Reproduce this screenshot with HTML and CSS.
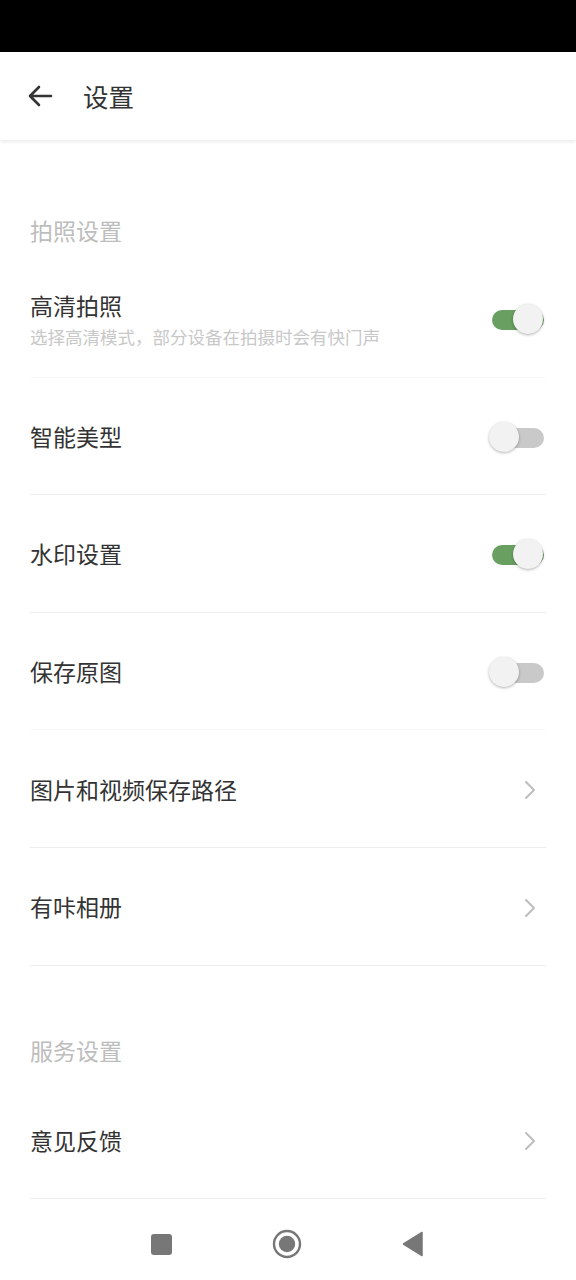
FILE: index.html
```html
<!DOCTYPE html>
<html lang="zh-CN">
<head>
    <meta charset="UTF-8">
    <meta name="viewport" content="width=device-width, initial-scale=1.0">
    <title>设置</title>
    <link rel="stylesheet" href="styles.css">
</head>
<body>
    <div class="status-bar"></div>

    <header class="app-bar">
        <svg class="back-icon" width="28" height="28" viewBox="0 0 28 28">
            <path d="M25 14H4M13 5l-9 9 9 9" fill="none" stroke="#333" stroke-width="2.6" stroke-linecap="round" stroke-linejoin="round"/>
        </svg>
        <h1 class="app-title">设置</h1>
    </header>

    <main class="content">
        <div class="section-title">拍照设置</div>

        <div class="row row--faint">
            <div class="row-text">
                <div class="row-title">高清拍照</div>
                <div class="row-desc">选择高清模式，部分设备在拍摄时会有快门声</div>
            </div>
            <span class="switch switch--on"><span class="thumb"></span></span>
        </div>
        <div class="row">
            <div class="row-title">智能美型</div>
            <span class="switch"><span class="thumb"></span></span>
        </div>
        <div class="row">
            <div class="row-title">水印设置</div>
            <span class="switch switch--on"><span class="thumb"></span></span>
        </div>
        <div class="row row--faint">
            <div class="row-title">保存原图</div>
            <span class="switch"><span class="thumb"></span></span>
        </div>
        <div class="row">
            <div class="row-title">图片和视频保存路径</div>
            <svg class="chevron" width="14" height="22" viewBox="0 0 14 22"><path d="M3 3l8 8-8 8" fill="none" stroke="#bdbdbd" stroke-width="2" stroke-linecap="round" stroke-linejoin="round"/></svg>
        </div>
        <div class="row">
            <div class="row-title">有咔相册</div>
            <svg class="chevron" width="14" height="22" viewBox="0 0 14 22"><path d="M3 3l8 8-8 8" fill="none" stroke="#bdbdbd" stroke-width="2" stroke-linecap="round" stroke-linejoin="round"/></svg>
        </div>

        <div class="section-title section-title--second">服务设置</div>

        <div class="row">
            <div class="row-title">意见反馈</div>
            <svg class="chevron" width="14" height="22" viewBox="0 0 14 22"><path d="M3 3l8 8-8 8" fill="none" stroke="#bdbdbd" stroke-width="2" stroke-linecap="round" stroke-linejoin="round"/></svg>
        </div>
    </main>

    <nav class="nav-bar">
        <span class="nav-square"></span>
        <svg width="30" height="30" viewBox="0 0 30 30">
            <circle cx="15" cy="15" r="13" fill="none" stroke="#777" stroke-width="2.4"/>
            <circle cx="15" cy="15" r="8.2" fill="#777"/>
        </svg>
        <svg width="22" height="26" viewBox="0 0 22 26">
            <path d="M20 1.5v23L1.5 13z" fill="#777" stroke="#777" stroke-width="1.5" stroke-linejoin="round"/>
        </svg>
    </nav>
</body>
</html>
```

FILE: styles.css
```css
body, html {
    margin: 0;
    padding: 0;
    background-color: #fff;
    font-family: "Noto Sans CJK SC", "Noto Sans", sans-serif;
    color: #333;
}

.status-bar {
    height: 52px;
    background-color: #000;
}

.app-bar {
    height: 88px;
    display: flex;
    align-items: center;
    padding-left: 26px;
    box-shadow: 0 2px 3px rgba(0, 0, 0, 0.08);
    position: relative;
}
.back-icon {
    display: block;
}
.app-title {
    margin: 0 0 0 29px;
    font-size: 25.5px;
    font-weight: normal;
    line-height: 34px;
    color: #333;
}

.content {
    padding: 0 30px;
}

.section-title {
    padding: 74px 0 13px;
    font-size: 23px;
    line-height: 33px;
    color: #bdbdbd;
}
.section-title--second {
    padding: 68px 0 15px;
}

.row {
    height: 116.6px;
    display: flex;
    align-items: center;
    justify-content: space-between;
    border-bottom: 1px solid #ececec;
}
.row--faint {
    border-bottom-color: #f8f8f8;
}
.row-text {
    display: flex;
    flex-direction: column;
    gap: 5px;
    padding-top: 2px;
}
.row-title {
    font-size: 23px;
    line-height: 30px;
    color: #333;
}
.row-desc {
    font-size: 17.5px;
    line-height: 24px;
    color: #c8c8c8;
}

/* 开关 */
.switch {
    position: relative;
    width: 52px;
    height: 20px;
    border-radius: 10px;
    background-color: #c9c9c9;
    margin-right: 2px;
    margin-top: 4px;
}
.switch--on {
    background-color: #6a9f62;
}
.switch .thumb {
    position: absolute;
    top: -6px;
    left: -3px;
    width: 30px;
    height: 30px;
    border-radius: 50%;
    background-color: #f2f2f2;
    box-shadow: 0 1px 3px rgba(0, 0, 0, 0.3);
}
.switch--on .thumb {
    left: 21px;
}

.chevron {
    display: block;
    margin-right: 9px;
    margin-top: 3px;
}

.nav-bar {
    height: 70px;
    padding-top: 10px;
    display: flex;
    align-items: center;
    justify-content: center;
    gap: 100px;
    padding-right: 2px;
}
.nav-square {
    width: 21px;
    height: 21px;
    border-radius: 3px;
    background-color: #777;
}
```
